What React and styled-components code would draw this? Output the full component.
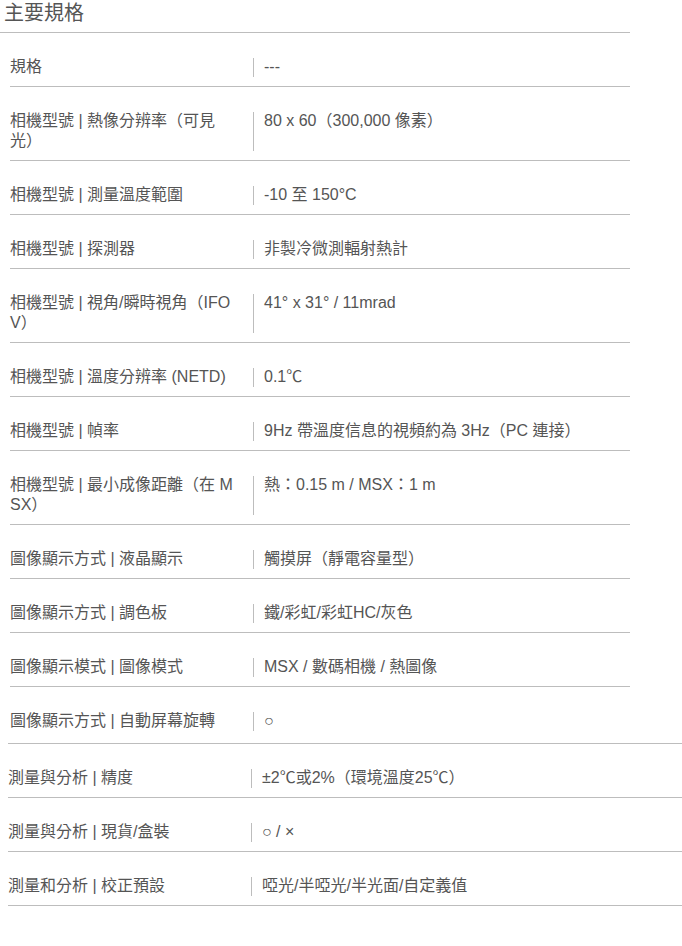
import React from "react";
import styled, { createGlobalStyle } from "styled-components";

const GlobalStyle = createGlobalStyle`
  html, body {
    margin: 0;
    padding: 0;
    background: #fff;
  }
  body {
    font-family: "Liberation Sans", Arial, "Noto Sans CJK TC", sans-serif;
    color: #555;
  }
`;

const mainSpecs = [
  ["規格", "---"],
  ["相機型號 | 熱像分辨率（可見光）", "80 x 60（300,000 像素）"],
  ["相機型號 | 測量溫度範圍", "-10 至 150°C"],
  ["相機型號 | 探測器", "非製冷微測輻射熱計"],
  ["相機型號 | 視角/瞬時視角（IFOV）", "41° x 31° / 11mrad"],
  ["相機型號 | 溫度分辨率 (NETD)", "0.1℃"],
  ["相機型號 | 幀率", "9Hz 帶溫度信息的視頻約為 3Hz（PC 連接）"],
  ["相機型號 | 最小成像距離（在 MSX）", "熱：0.15 m / MSX：1 m"],
  ["圖像顯示方式 | 液晶顯示", "觸摸屏（靜電容量型）"],
  ["圖像顯示方式 | 調色板", "鐵/彩虹/彩虹HC/灰色"],
  ["圖像顯示模式 | 圖像模式", "MSX / 數碼相機 / 熱圖像"],
  ["圖像顯示方式 | 自動屏幕旋轉", "○"],
];

const measureSpecs = [
  ["測量與分析 | 精度", "±2℃或2%（環境溫度25℃）"],
  ["測量與分析 | 現貨/盒裝", "○ / ×"],
  ["測量和分析 | 校正預設", "啞光/半啞光/半光面/自定義值"],
];

const Page = styled.div`
  width: 682px;
  min-height: 946px;
  box-sizing: border-box;
`;

const Heading = styled.h2`
  margin: 0;
  width: 630px;
  box-sizing: border-box;
  padding: 0 4px 6px;
  font-size: 20px;
  line-height: 26px;
  font-weight: normal;
  color: #555;
  border-bottom: 1px solid #bdbdbd;
`;

const Table = styled.div`
  display: flex;
  flex-direction: column;
  margin-left: ${(p) => (p.$wide ? "8px" : "10px")};
  width: ${(p) => (p.$wide ? "674px" : "620px")};
  border-top: ${(p) => (p.$wide ? "1px solid #bdbdbd" : "none")};
  margin-top: ${(p) => (p.$wide ? "3px" : "0")};
`;

const Row = styled.div`
  display: flex;
  align-items: stretch;
  padding: 24px 0 9px;
  font-size: 16px;
  line-height: 20px;
  border-bottom: ${(p) => (p.$last ? "none" : "1px solid #bdbdbd")};
`;

const Label = styled.div`
  flex: 0 0 243px;
  box-sizing: border-box;
  padding-right: 16px;
  word-break: break-all;
`;

const Value = styled.div`
  flex: 1;
  margin-top: 1px;
  padding-left: 10px;
  border-left: 1px solid #bdbdbd;
  span {
    display: block;
    margin-top: -1px;
  }
`;

const SpecTable = ({ rows, wide, lastOpen }) => (
  <Table $wide={wide}>
    {rows.map(([label, value], i) => (
      <Row key={label} $last={lastOpen && i === rows.length - 1}>
        <Label>{label}</Label>
        <Value>
          <span>{value}</span>
        </Value>
      </Row>
    ))}
  </Table>
);

export default function App() {
  return (
    <>
      <GlobalStyle />
      <Page>
        <Heading>主要規格</Heading>
        <SpecTable rows={mainSpecs} lastOpen />
        <SpecTable rows={measureSpecs} wide />
      </Page>
    </>
  );
}
